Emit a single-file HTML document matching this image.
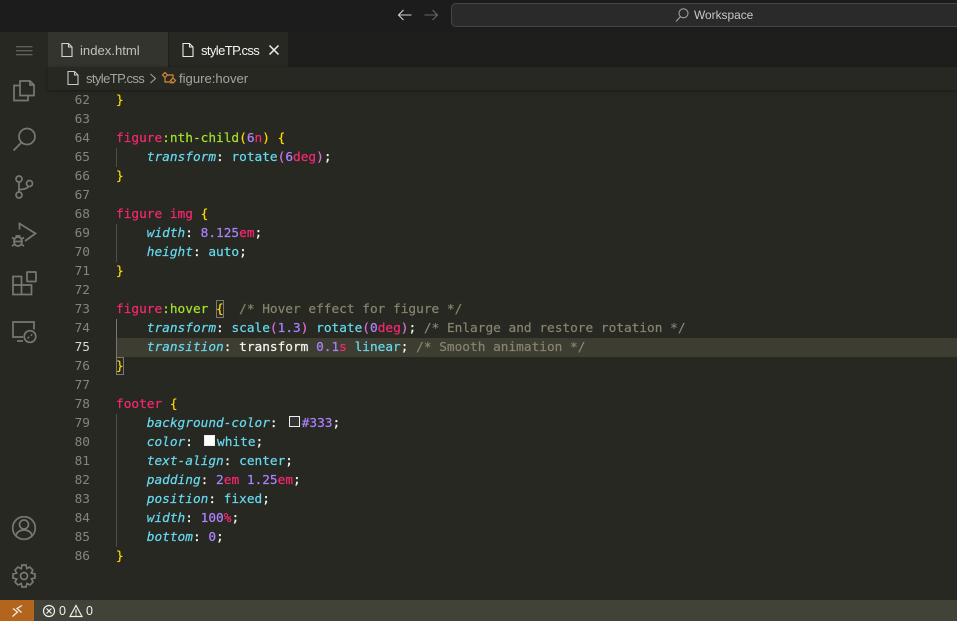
<!DOCTYPE html>
<html><head><meta charset="utf-8">
<style>
html,body{margin:0;padding:0}
body{width:957px;height:621px;overflow:hidden;background:#272822;position:relative;font-family:"Liberation Sans",sans-serif}
.abs{position:absolute}
.l{position:absolute;left:116px;height:19px;line-height:19px;font-family:"DejaVu Sans Mono",monospace;font-size:12.79px;white-space:pre;color:#f8f8f2;-webkit-text-stroke:.2px}
.n{position:absolute;left:60px;width:30px;text-align:right;height:19px;line-height:19px;font-family:"DejaVu Sans Mono",monospace;font-size:12.79px;color:#85857b}
.g{position:absolute;left:116px;width:1px;background:#4f4f49}
.k{color:#f92672}.p{color:#a6e22e}.y{color:#ffd700}.a{color:#66d9ef;font-style:italic}.c{color:#66d9ef}.u{color:#ae81ff}.m{color:#88846f}.o{color:#da70d6}.w{color:#f8f8f2}
svg{position:absolute;fill:none;stroke:#787873;stroke-width:1.7}
.sw{display:inline-block;box-sizing:border-box;width:11px;height:11px;border:1px solid #eee;margin:0 2px 0 3.4px;vertical-align:0}
</style></head><body>
<div class="abs" style="left:0;top:0;width:957px;height:32px;background:#1c1c1c"></div>
<svg style="left:396px;top:7px" width="18" height="16" viewBox="0 0 18 16"><path d="M2.500 8H15.500M7.500 3L2.500 8L7.500 13" stroke="#d0d0d0" stroke-width="1.100"/></svg>
<svg style="left:422px;top:7px" width="18" height="16" viewBox="0 0 18 16"><path d="M2.500 8H15.500M10.500 3L15.500 8L10.500 13" stroke="#666" stroke-width="1.100"/></svg>
<div class="abs" style="left:451px;top:3px;width:520px;height:22px;background:#2a2a2a;border:1px solid #454545;border-radius:5px"></div>
<svg style="left:675px;top:7px" width="16" height="16" viewBox="0 0 16 16"><circle cx="8.500" cy="6.300" r="4.500" stroke="#a0a0a0" stroke-width="1.100"/><path d="M5.500 9.500L1 14.500" stroke="#a0a0a0" stroke-width="1.100"/></svg>
<div class="abs" style="left:694px;top:7px;font-size:11.9px;line-height:17px;color:#c8c8c8">Workspace</div>

<div class="abs" style="left:0;top:32px;width:48px;height:568px;background:#272822"></div>
<div class="abs" style="left:48px;top:32px;width:909px;height:35px;background:#1e1e1c"></div>
<div class="abs" style="left:48px;top:32px;width:120px;height:35px;background:#34342f"></div>
<div class="abs" style="left:169px;top:32px;width:119px;height:35px;background:#272822"></div>
<svg style="left:60px;top:42px" width="14" height="16" viewBox="0 0 14 16"><path d="M2 1.500H8.500L12 5V14.500H2ZM8.500 1.500V5H12" stroke="#d4d4d4" stroke-width="1.100"/></svg>
<div class="abs" style="left:80px;top:42px;font-size:13.1px;line-height:17px;color:#c0c0bc">index.html</div>
<svg style="left:181px;top:42px" width="14" height="16" viewBox="0 0 14 16"><path d="M2 1.500H8.500L12 5V14.500H2ZM8.500 1.500V5H12" stroke="#e8e8e8" stroke-width="1.100"/></svg>
<div class="abs" style="left:201px;top:42px;font-size:13px;letter-spacing:-.6px;line-height:17px;color:#f4f4f4">styleTP.css</div>
<svg style="left:268px;top:44px" width="12" height="12" viewBox="0 0 12 12"><path d="M1.500 1.500L10.500 10.500M10.500 1.500L1.500 10.500" stroke="#f0f0f0" stroke-width="1.500"/></svg>

<div class="abs" style="left:48px;top:67px;width:909px;height:23px;background:#272822;box-shadow:0 1px 3px #1a1a18"></div>
<svg style="left:66px;top:70px" width="14" height="16" viewBox="0 0 14 16"><path d="M2 1.500H8.500L12 5V14.500H2ZM8.500 1.500V5H12" stroke="#c8c8c8" stroke-width="1.100"/></svg>
<div class="abs" style="left:86px;top:70px;font-size:13px;letter-spacing:-.6px;line-height:17px;color:#a5a5a0">styleTP.css</div>
<svg style="left:149px;top:72px" width="8" height="13" viewBox="0 0 8 13"><path d="M1.500 2L6.500 6.500L1.500 11" stroke="#a0a0a0" stroke-width="1.100"/></svg>
<svg style="left:161px;top:71px" width="16" height="15" viewBox="0 0 16 15"><path d="M1.500 4L4 1.500L6.500 4L4 6.500ZM6.500 4H12V7M4 6.500V11H9M12 7L14.500 9.500L12 12L9.500 9.500ZM9 11L10.500 12.500" stroke="#d88a32" stroke-width="1.200"/></svg>
<div class="abs" style="left:179px;top:70px;font-size:13.1px;line-height:17px;color:#a5a5a0">figure:hover</div>

<svg style="left:16px;top:46px" width="17" height="10" viewBox="0 0 17 10"><path d="M0 .8H16.500M0 4.800H16.500M0 8.800H16.500" stroke="#74746f" stroke-width="1"/></svg>
<svg style="left:12px;top:78px" width="24" height="26" viewBox="0 0 24 26"><path d="M8 3H18L22 7V17.500H8ZM18 3V7H22"/><path d="M8 7.500H2V22.500H16V17.500"/></svg>
<svg style="left:12px;top:126px" width="25" height="26" viewBox="0 0 25 26"><circle cx="15" cy="10.500" r="8"/><path d="M9.500 16.500L1.500 24.500" stroke-width="1.800"/></svg>
<svg style="left:13px;top:174px" width="22" height="27" viewBox="0 0 22 27"><circle cx="6" cy="5" r="3"/><circle cx="6" cy="21" r="3"/><circle cx="16.500" cy="9.500" r="3"/><path d="M6 8V18M6 15.500C10 15.500 14 15 15.500 12.300"/></svg>
<svg style="left:11px;top:222px" width="26" height="26" viewBox="0 0 26 26"><path d="M8.500 7.500V1.500L24.500 11.500L14 19"/><ellipse cx="7" cy="19.500" rx="4" ry="4.500"/><path d="M3 19.500H11M1 15.500L3.500 17M13 15.500L10.500 17M1 24L3.500 22.500M13 24L10.500 22.500M4.500 14H9.500"/></svg>
<svg style="left:12px;top:271px" width="25" height="25" viewBox="0 0 25 25"><path d="M1 5.500H9.500V23.500H1ZM1 14H19.500V23.500H9.500"/><rect x="15" y="1" width="9" height="9.500" rx=".5"/></svg>
<svg style="left:12px;top:320px" width="25" height="24" viewBox="0 0 25 24"><path d="M11 17H1V2H22V9.500M5 21H11"/><circle cx="18" cy="16.500" r="5.800"/><path d="M15.500 18.500L17.300 16.700M18.700 15.800L20.300 14.200" stroke-width="1.300"/></svg>
<svg style="left:12px;top:516px" width="25" height="25" viewBox="0 0 25 25"><circle cx="12" cy="12" r="11.300"/><circle cx="12" cy="8.500" r="4.500"/><path d="M4 20C4.500 16 8 14 12 14C16 14 19.500 16 20 20"/></svg>
<svg style="left:12px;top:564px" width="25" height="25" viewBox="0 0 25 25"><path d="M10 1H14L14.800 4.500L17.800 3L20.800 6L19.200 9L23 10V14L19.500 14.800L21 18L18 21L15 19.500L14 23H10L9.200 19.500L6 21L3 18L4.700 15L1 14V10L4.600 9.100L3 6L6 3L9.200 4.700Z"/><circle cx="12" cy="12" r="3.500"/></svg>

<div class="abs" style="left:116px;top:338px;width:841px;height:19px;background:#3e3d32"></div>
<div class="g" style="top:148px;height:19px"></div>
<div class="g" style="top:224px;height:38px"></div>
<div class="g" style="top:319px;height:38px;background:#77776f"></div>
<div class="g" style="top:414px;height:133px"></div>
<div class="abs" style="left:216px;top:300px;width:6px;height:16px;border:1px solid #7a7a72"></div>
<div class="abs" style="left:116px;top:357px;width:6px;height:16px;border:1px solid #7a7a72"></div>

<div class="n" style="top:91px">62</div><div class="l" style="top:91px"><span class="y">}</span></div>
<div class="n" style="top:110px">63</div>
<div class="n" style="top:129px">64</div><div class="l" style="top:129px"><span class="k">figure</span><span class="p">:nth-child</span><span class="y">(</span><span class="u">6</span><span class="k">n</span><span class="y">)</span> <span class="y">{</span></div>
<div class="n" style="top:148px">65</div><div class="l" style="top:148px">    <span class="a">transform</span>: <span class="c">rotate</span><span class="o">(</span><span class="u">6</span><span class="k">deg</span><span class="o">)</span>;</div>
<div class="n" style="top:167px">66</div><div class="l" style="top:167px"><span class="y">}</span></div>
<div class="n" style="top:186px">67</div>
<div class="n" style="top:205px">68</div><div class="l" style="top:205px"><span class="k">figure img</span> <span class="y">{</span></div>
<div class="n" style="top:224px">69</div><div class="l" style="top:224px">    <span class="a">width</span>: <span class="u">8.125</span><span class="k">em</span>;</div>
<div class="n" style="top:243px">70</div><div class="l" style="top:243px">    <span class="a">height</span>: <span class="c">auto</span>;</div>
<div class="n" style="top:262px">71</div><div class="l" style="top:262px"><span class="y">}</span></div>
<div class="n" style="top:281px">72</div>
<div class="n" style="top:300px">73</div><div class="l" style="top:300px"><span class="k">figure</span><span class="p">:hover</span> <span class="y">{</span>  <span class="m">/* Hover effect for figure */</span></div>
<div class="n" style="top:319px">74</div><div class="l" style="top:319px">    <span class="a">transform</span>: <span class="c">scale</span><span class="o">(</span><span class="u">1.3</span><span class="o">)</span> <span class="c">rotate</span><span class="o">(</span><span class="u">0</span><span class="k">deg</span><span class="o">)</span>; <span class="m">/* Enlarge and restore rotation */</span></div>
<div class="n" style="top:338px;color:#d8d8d0">75</div><div class="l" style="top:338px">    <span class="a">transition</span>: transform <span class="u">0.1</span><span class="k">s</span> <span class="c">linear</span>; <span class="m">/* Smooth animation */</span></div>
<div class="n" style="top:357px">76</div><div class="l" style="top:357px"><span class="y">}</span></div>
<div class="n" style="top:376px">77</div>
<div class="n" style="top:395px">78</div><div class="l" style="top:395px"><span class="k">footer</span> <span class="y">{</span></div>
<div class="n" style="top:414px">79</div><div class="l" style="top:414px">    <span class="a">background-color</span>: <span class="sw" style="background:#333"></span><span class="u">#333</span>;</div>
<div class="n" style="top:433px">80</div><div class="l" style="top:433px">    <span class="a">color</span>: <span class="sw" style="background:#fff"></span><span class="c">white</span>;</div>
<div class="n" style="top:452px">81</div><div class="l" style="top:452px">    <span class="a">text-align</span>: <span class="c">center</span>;</div>
<div class="n" style="top:471px">82</div><div class="l" style="top:471px">    <span class="a">padding</span>: <span class="u">2</span><span class="k">em</span> <span class="u">1.25</span><span class="k">em</span>;</div>
<div class="n" style="top:490px">83</div><div class="l" style="top:490px">    <span class="a">position</span>: <span class="c">fixed</span>;</div>
<div class="n" style="top:509px">84</div><div class="l" style="top:509px">    <span class="a">width</span>: <span class="u">100</span><span class="k">%</span>;</div>
<div class="n" style="top:528px">85</div><div class="l" style="top:528px">    <span class="a">bottom</span>: <span class="u">0</span>;</div>
<div class="n" style="top:547px">86</div><div class="l" style="top:547px"><span class="y">}</span></div>

<div class="abs" style="left:0;top:600px;width:957px;height:21px;background:#414339"></div>
<div class="abs" style="left:0;top:600px;width:34px;height:21px;background:#b4651d"></div>
<svg style="left:11px;top:604px" width="13" height="14" viewBox="0 0 13 14"><path d="M1.500 12.500L6.500 8L2 4.500M11 1.500L6 4.500L10.500 8.500" stroke="#f0f0f0" stroke-width="1.200"/></svg>
<svg style="left:42px;top:604px" width="14" height="14" viewBox="0 0 14 14"><circle cx="7" cy="7" r="5.500" stroke="#f0f0f0" stroke-width="1.200"/><path d="M4.500 4.500L9.500 9.500M9.500 4.500L4.500 9.500" stroke="#f0f0f0" stroke-width="1.200"/></svg>
<div class="abs" style="left:59px;top:603px;font-size:12.5px;line-height:16px;color:#f0f0f0">0</div>
<svg style="left:69px;top:604px" width="14" height="14" viewBox="0 0 14 14"><path d="M7 1.500L13 12.500H1ZM7 5.500V9.500M7 10.500V11.500" stroke="#f0f0f0" stroke-width="1.200"/></svg>
<div class="abs" style="left:86px;top:603px;font-size:12.5px;line-height:16px;color:#f0f0f0">0</div>
</body></html>
